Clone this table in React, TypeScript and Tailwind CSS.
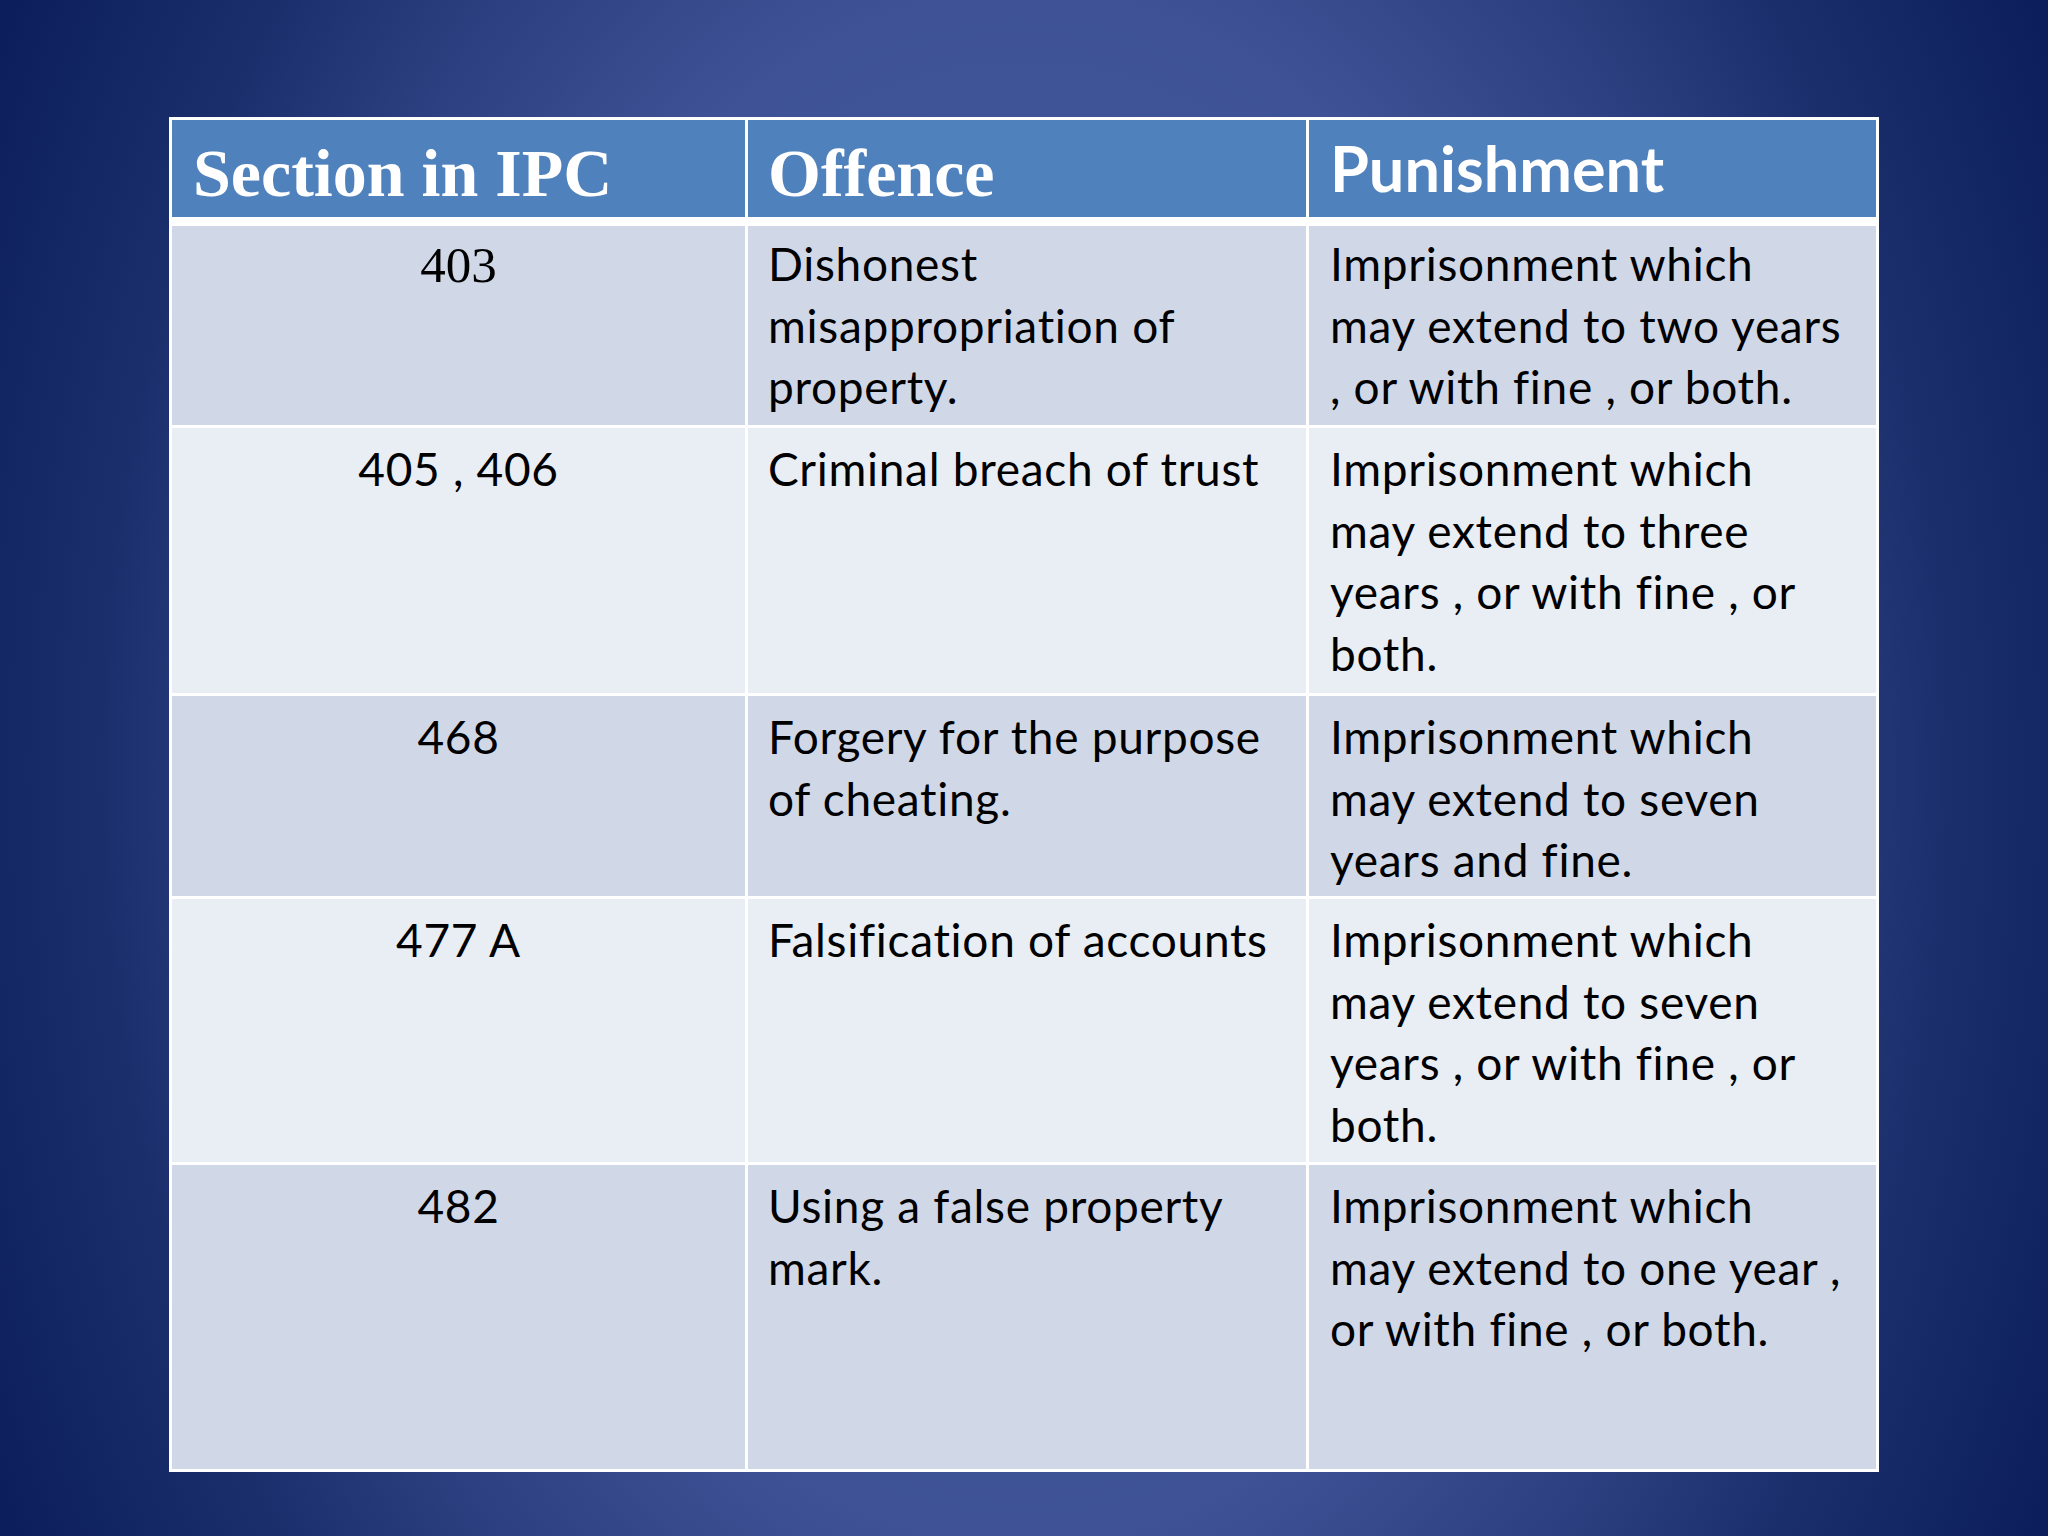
const body = 'font-["Lato",sans-serif] text-[46px] leading-[61.5px] tracking-[0.7px] text-black whitespace-nowrap';

type Row = {
  section: string;
  serif?: boolean;
  offence: string[];
  punishment: string[];
  height: string;
  pad: string;
  bg: string;
};

const rows: Row[] = [
  {
    section: '403',
    serif: true,
    offence: ['Dishonest', 'misappropriation of', 'property.'],
    punishment: ['Imprisonment which', 'may extend to two years', ', or with fine , or both.'],
    height: 'h-[199px]',
    pad: 'pt-[7px]',
    bg: 'bg-[#d0d8e8]',
  },
  {
    section: '405 , 406',
    offence: ['Criminal breach of trust'],
    punishment: ['Imprisonment which', 'may extend to three', 'years , or with fine , or', 'both.'],
    height: 'h-[265px]',
    pad: 'pt-[10px]',
    bg: 'bg-[#e9edf4]',
  },
  {
    section: '468',
    offence: ['Forgery for the purpose', 'of cheating.'],
    punishment: ['Imprisonment which', 'may extend to seven', 'years and fine.'],
    height: 'h-[200px]',
    pad: 'pt-[10px]',
    bg: 'bg-[#d0d8e8]',
  },
  {
    section: '477 A',
    offence: ['Falsification of accounts'],
    punishment: ['Imprisonment which', 'may extend to seven', 'years , or with fine , or', 'both.'],
    height: 'h-[263px]',
    pad: 'pt-[10px]',
    bg: 'bg-[#e9edf4]',
  },
  {
    section: '482',
    offence: ['Using a false property', 'mark.'],
    punishment: ['Imprisonment which', 'may extend to one year ,', 'or with fine , or both.'],
    height: 'h-[304px]',
    pad: 'pt-[10px]',
    bg: 'bg-[#d0d8e8]',
  },
];

const Lines = ({ lines }: { lines: string[] }) => (
  <>
    {lines.map((l, i) => (
      <div key={i}>{l}</div>
    ))}
  </>
);

export default function App() {
  return (
    <div className="w-full h-[1536px] overflow-hidden flex justify-center pt-[117px] bg-[radial-gradient(ellipse_1000px_1400px_at_50%_50%,#4560a3_0%,#3e5295_55%,#2d4081_75%,#1b2f6d_92%,#0c1f5c_115%)]">
      <div className="w-[1710px] h-fit bg-white p-[3px] flex flex-col gap-[3px]">
        {/* header */}
        <div className="grid grid-cols-[573px_558px_567px] gap-[3px] mb-[6px]">
          <div className="h-[97px] bg-[#4f81bd] px-[21px] pt-[15px] font-['Liberation_Serif',serif] font-bold text-[68px] leading-[76px] text-white whitespace-nowrap">
            Section in IPC
          </div>
          <div className="h-[97px] bg-[#4f81bd] px-[20px] pt-[15px] font-['Liberation_Serif',serif] font-bold text-[68px] leading-[76px] text-white whitespace-nowrap">
            Offence
          </div>
          <div className="h-[97px] bg-[#4f81bd] px-[21px] pt-[10px] font-['Lato',sans-serif] font-bold text-[63px] leading-[76px] text-white whitespace-nowrap">
            Punishment
          </div>
        </div>

        {rows.map((r) => (
          <div key={r.section} className="grid grid-cols-[573px_558px_567px] gap-[3px]">
            <div
              className={`${r.height} ${r.bg} text-center ${
                r.serif
                  ? "font-['Liberation_Serif',serif] text-[51px] leading-[61.5px] text-black pt-[9px]"
                  : `${body} ${r.pad}`
              }`}
            >
              {r.section}
            </div>
            <div className={`${r.height} ${r.bg} px-[20px] ${r.pad} ${body}`}>
              <Lines lines={r.offence} />
            </div>
            <div className={`${r.height} ${r.bg} px-[21px] ${r.pad} ${body}`}>
              <Lines lines={r.punishment} />
            </div>
          </div>
        ))}
      </div>
    </div>
  );
}
